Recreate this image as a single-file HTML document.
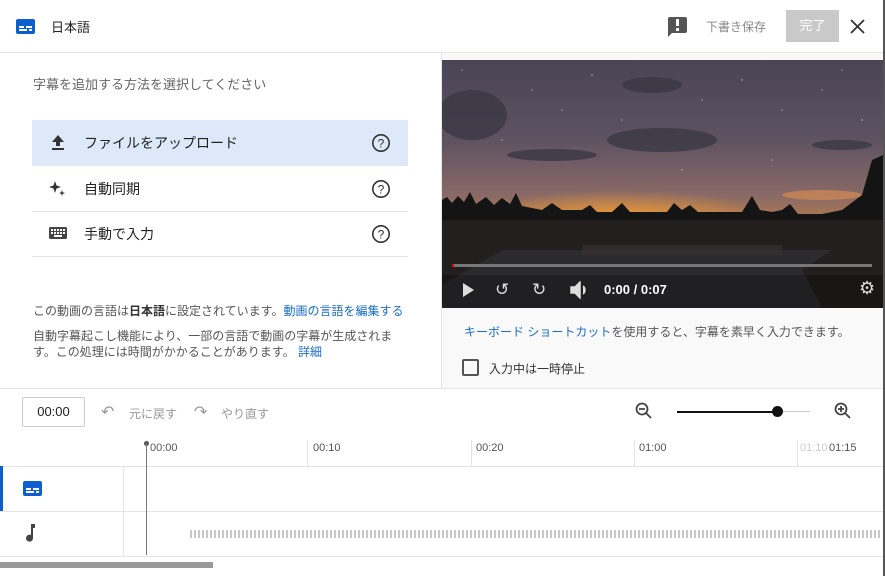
<!DOCTYPE html>
<html><head><meta charset="utf-8"><style>
*{box-sizing:border-box;margin:0;padding:0}
body{width:885px;height:576px;overflow:hidden;background:#fff;font-family:"Liberation Sans","Noto Sans CJK JP",sans-serif;color:#333;position:relative}
.a{position:absolute}
.t{font-size:12px;color:#555}
.blue{color:#1a6cc9}
</style></head><body>
<!-- header -->
<div class="a" style="left:16px;top:19px;width:19px;height:15px;background:#0d5fd0;border-radius:2px"></div>
<div class="a" style="left:19px;top:26px;width:5px;height:2px;background:#fff"></div>
<div class="a" style="left:26px;top:26px;width:6px;height:2px;background:#fff"></div>
<div class="a" style="left:19px;top:29px;width:8px;height:2px;background:#fff"></div>
<div class="a" style="left:29px;top:29px;width:3px;height:2px;background:#fff"></div>
<div class="a" style="left:51px;top:17px;font-size:13px;color:#222">日本語</div>
<div class="a" style="left:668px;top:17px;width:19px;height:16px;background:#555;border-radius:2px"></div>
<div class="a" style="left:668px;top:32px;width:0;height:0;border-top:5px solid #555;border-right:5px solid transparent"></div>
<div class="a" style="left:676px;top:19px;width:3px;height:7px;background:#fff"></div>
<div class="a" style="left:676px;top:28px;width:3px;height:3px;background:#fff"></div>
<div class="a" style="left:706px;top:18px;font-size:12px;color:#888">下書き保存</div>
<div class="a" style="left:786px;top:10px;width:53px;height:32px;background:#c9c9c9;color:#fff;font-size:13px;text-align:center;line-height:32px">完了</div>
<svg class="a" style="left:850px;top:19px" width="15" height="15"><path d="M1 1l13 13M14 1L1 14" stroke="#333" stroke-width="1.8"/></svg>
<div class="a" style="left:0;top:52px;width:885px;height:1px;background:#e4e4e4"></div>
<!-- left panel -->
<div class="a t" style="left:33px;top:74px;font-size:13px;color:#666">字幕を追加する方法を選択してください</div>
<div class="a" style="left:32px;top:120px;width:376px;height:45px;background:#dde9f8"></div>
<div class="a" style="left:32px;top:211px;width:376px;height:1px;background:#e4e4e4"></div>
<div class="a" style="left:32px;top:256px;width:376px;height:1px;background:#e4e4e4"></div>
<div class="a" style="left:32px;top:165px;width:376px;height:1px;background:#e8e8e8"></div>
<svg class="a" style="left:49px;top:133px" width="18" height="18" viewBox="0 0 18 18"><path d="M9 2L3 9h4v4h4V9h4z M3 15h12v2H3z" fill="#333"/></svg>
<div class="a" style="left:84px;top:133px;font-size:14px;color:#222">ファイルをアップロード</div>
<svg class="a" style="left:48px;top:179px" width="20" height="20" viewBox="0 0 20 20"><path d="M7 2l1.5 4.5L13 8l-4.5 1.5L7 14l-1.5-4.5L1 8l4.5-1.5z M14 11l.8 2.2 2.2.8-2.2.8L14 17l-.8-2.2-2.2-.8 2.2-.8z" fill="#333"/></svg>
<div class="a" style="left:84px;top:179px;font-size:14px;color:#222">自動同期</div>
<svg class="a" style="left:48px;top:225px" width="20" height="16" viewBox="0 0 20 16"><rect x="1" y="2" width="18" height="12" rx="1.5" fill="#444"/><g fill="#fff"><rect x="3" y="4" width="2" height="2"/><rect x="6" y="4" width="2" height="2"/><rect x="9" y="4" width="2" height="2"/><rect x="12" y="4" width="2" height="2"/><rect x="15" y="4" width="2" height="2"/><rect x="3" y="7" width="2" height="2"/><rect x="6" y="7" width="2" height="2"/><rect x="9" y="7" width="2" height="2"/><rect x="12" y="7" width="2" height="2"/><rect x="15" y="7" width="2" height="2"/><rect x="6" y="10" width="8" height="2"/></g></svg>
<div class="a" style="left:84px;top:224px;font-size:14px;color:#222">手動で入力</div>
<svg class="a" style="left:371px;top:133px" width="20" height="20" viewBox="0 0 20 20"><circle cx="10" cy="10" r="8.2" fill="none" stroke="#333" stroke-width="1.6"/><text x="10" y="14.5" font-size="12" text-anchor="middle" fill="#333" font-family="Liberation Sans">?</text></svg>
<svg class="a" style="left:371px;top:179px" width="20" height="20" viewBox="0 0 20 20"><circle cx="10" cy="10" r="8.2" fill="none" stroke="#333" stroke-width="1.6"/><text x="10" y="14.5" font-size="12" text-anchor="middle" fill="#333" font-family="Liberation Sans">?</text></svg>
<svg class="a" style="left:371px;top:224px" width="20" height="20" viewBox="0 0 20 20"><circle cx="10" cy="10" r="8.2" fill="none" stroke="#333" stroke-width="1.6"/><text x="10" y="14.5" font-size="12" text-anchor="middle" fill="#333" font-family="Liberation Sans">?</text></svg>
<div class="a t" style="left:33px;top:302px">この動画の言語は<b style="color:#333">日本語</b>に設定されています。<span class="blue">動画の言語を編集する</span></div>
<div class="a t" style="left:33px;top:328px;width:380px;line-height:16px">自動字幕起こし機能により、一部の言語で動画の字幕が生成されます。この処理には時間がかかることがあります。 <span class="blue">詳細</span></div>
<!-- right panel -->
<div class="a" style="left:441px;top:53px;width:442px;height:335px;background:#f9f9f9;border-left:1px solid #e4e4e4"></div>
<svg class="a" style="left:442px;top:60px" width="441" height="248" viewBox="0 0 441 248">
<defs>
<linearGradient id="sky" x1="0" y1="0" x2="0" y2="1"><stop offset="0" stop-color="#4a4454"/><stop offset=".5" stop-color="#5e5262"/><stop offset=".85" stop-color="#8a6a66"/><stop offset="1" stop-color="#b07850"/></linearGradient>
<radialGradient id="glow" cx=".45" cy="1" r=".6"><stop offset="0" stop-color="#ffd040"/><stop offset=".3" stop-color="#e89838" stop-opacity=".8"/><stop offset="1" stop-color="#e89838" stop-opacity="0"/></radialGradient>
</defs>
<rect width="441" height="160" fill="url(#sky)"/>
<rect x="60" y="110" width="260" height="50" fill="url(#glow)"/>
<ellipse cx="380" cy="135" rx="40" ry="5" fill="#e09050" opacity=".6"/>
<g fill="#3a3844" opacity=".8"><ellipse cx="220" cy="80" rx="55" ry="12"/><ellipse cx="110" cy="95" rx="45" ry="6"/><ellipse cx="30" cy="55" rx="35" ry="25"/><ellipse cx="210" cy="25" rx="30" ry="8"/><ellipse cx="400" cy="85" rx="30" ry="5"/></g>
<g fill="#fff" opacity=".7"><circle cx="20" cy="10" r=".6"/><circle cx="90" cy="30" r=".6"/><circle cx="150" cy="15" r=".7"/><circle cx="260" cy="40" r=".6"/><circle cx="300" cy="20" r=".7"/><circle cx="340" cy="50" r=".6"/><circle cx="380" cy="30" r=".6"/><circle cx="420" cy="60" r=".7"/><circle cx="180" cy="60" r=".6"/><circle cx="60" cy="80" r=".6"/><circle cx="330" cy="100" r=".6"/><circle cx="240" cy="110" r=".6"/><circle cx="120" cy="50" r=".6"/><circle cx="400" cy="10" r=".6"/></g>
<rect y="158" width="441" height="90" fill="#221f1e"/>
<path d="M0 160 L0 140 L5 137 L10 143 L16 136 L22 142 L28 132 L34 144 L44 137 L52 145 L60 138 L68 144 L74 133 L80 146 L90 148 L100 150 L110 143 L120 150 L140 150 L148 145 L155 152 L170 152 L180 143 L188 152 L225 152 L232 143 L240 150 L248 145 L256 152 L300 152 L310 136 L318 150 L330 152 L340 150 L348 144 L356 154 L380 154 L400 150 L420 135 L430 100 L441 95 L441 160 Z" fill="#151414"/>
<path d="M60 190 L390 190 L360 210 L380 248 L0 248 L0 225 Z" fill="#2b2a2c"/>
<rect x="140" y="185" width="200" height="10" fill="#3a3234" opacity=".6"/>
<rect y="215" width="441" height="33" fill="#000" opacity=".25"/>
</svg>
<div class="a" style="left:452px;top:264px;width:420px;height:3px;background:#777"></div>
<div class="a" style="left:452px;top:264px;width:2px;height:3px;background:#e00"></div>
<svg class="a" style="left:462px;top:282px" width="14" height="16"><path d="M1 1l11 7-11 7z" fill="#ddd"/></svg>
<div class="a" style="left:495px;top:280px;font-size:17px;color:#ddd">↺</div>
<div class="a" style="left:532px;top:280px;font-size:17px;color:#ddd">↻</div>
<svg class="a" style="left:570px;top:281px" width="20" height="18"><path d="M1 6h4l5-5v16l-5-5H1z M13 5a5 5 0 0 1 0 8" fill="#ddd" stroke="#ddd" stroke-width="1.5"/></svg>
<div class="a" style="left:604px;top:282px;font-size:13px;color:#fff;font-weight:bold">0:00 / 0:07</div>
<div class="a" style="left:859px;top:278px;font-size:18px;color:#ddd;font-family:'DejaVu Sans',sans-serif">⚙</div>
<div class="a t" style="left:464px;top:323px"><span class="blue">キーボード ショートカット</span>を使用すると、字幕を素早く入力できます。</div>
<div class="a" style="left:462px;top:359px;width:17px;height:17px;border:2px solid #555;border-radius:2px"></div>
<div class="a t" style="left:489px;top:360px;color:#333">入力中は一時停止</div>
<div class="a" style="left:0;top:388px;width:885px;height:1px;background:#e4e4e4"></div>
<!-- toolbar -->
<div class="a" style="left:22px;top:397px;width:63px;height:30px;border:1px solid #ccc;border-radius:2px;font-size:13px;text-align:center;line-height:28px;color:#222">00:00</div>
<div class="a" style="left:101px;top:402px;font-size:16px;color:#999">↶</div>
<div class="a" style="left:129px;top:405px;font-size:12px;color:#999">元に戻す</div>
<div class="a" style="left:194px;top:402px;font-size:16px;color:#999">↷</div>
<div class="a" style="left:221px;top:405px;font-size:12px;color:#999">やり直す</div>
<svg class="a" style="left:635px;top:402px" width="18" height="18"><circle cx="7" cy="7" r="5.5" fill="none" stroke="#444" stroke-width="1.8"/><path d="M4 7h6M11 11l5 5" stroke="#444" stroke-width="1.8"/></svg>
<div class="a" style="left:677px;top:411px;width:100px;height:2px;background:#111"></div>
<div class="a" style="left:777px;top:411px;width:33px;height:1px;background:#ccc"></div>
<div class="a" style="left:772px;top:406px;width:11px;height:11px;border-radius:50%;background:#111"></div>
<svg class="a" style="left:834px;top:402px" width="18" height="18"><circle cx="7" cy="7" r="5.5" fill="none" stroke="#444" stroke-width="1.8"/><path d="M4 7h6M7 4v6M11 11l5 5" stroke="#444" stroke-width="1.8"/></svg>
<!-- timeline -->
<div class="a" style="left:0;top:466px;width:885px;height:1px;background:#e4e4e4"></div>
<div class="a" style="left:0;top:511px;width:885px;height:1px;background:#e4e4e4"></div>
<div class="a" style="left:0;top:556px;width:885px;height:1px;background:#e4e4e4"></div>
<div class="a" style="left:123px;top:466px;width:1px;height:90px;background:#e4e4e4"></div>
<div class="a" style="left:0;top:466px;width:3px;height:45px;background:#0d5fd0"></div>
<div class="a" style="left:307px;top:440px;width:1px;height:26px;background:#e4e4e4"></div>
<div class="a" style="left:471px;top:440px;width:1px;height:26px;background:#e4e4e4"></div>
<div class="a" style="left:634px;top:440px;width:1px;height:26px;background:#e4e4e4"></div>
<div class="a" style="left:797px;top:440px;width:1px;height:26px;background:#e4e4e4"></div>
<div class="a" style="left:150px;top:442px;font-size:11px;color:#555">00:00</div>
<div class="a" style="left:313px;top:442px;font-size:11px;color:#555">00:10</div>
<div class="a" style="left:476px;top:442px;font-size:11px;color:#555">00:20</div>
<div class="a" style="left:639px;top:442px;font-size:11px;color:#555">01:00</div>
<div class="a" style="left:800px;top:442px;font-size:11px;color:#ccc">01:10</div>
<div class="a" style="left:829px;top:442px;font-size:11px;color:#555">01:15</div>
<div class="a" style="left:144px;top:441px;width:5px;height:5px;border-radius:50%;background:#555"></div>
<div class="a" style="left:146px;top:443px;width:1px;height:112px;background:#777"></div>
<div class="a" style="left:23px;top:481px;width:19px;height:15px;background:#0d5fd0;border-radius:2px"></div>
<div class="a" style="left:26px;top:488px;width:5px;height:2px;background:#fff"></div>
<div class="a" style="left:33px;top:488px;width:6px;height:2px;background:#fff"></div>
<div class="a" style="left:26px;top:491px;width:8px;height:2px;background:#fff"></div>
<div class="a" style="left:36px;top:491px;width:3px;height:2px;background:#fff"></div>
<svg class="a" style="left:24px;top:523px" width="14" height="20"><path d="M7 1h4v4H9v10a3.5 3.5 0 1 1-2-3z" fill="#444"/></svg>
<div class="a" style="left:190px;top:530px;width:690px;height:8px;background:repeating-linear-gradient(90deg,#c8c8c8 0 2px,transparent 2px 4px)"></div>
<div class="a" style="left:0;top:562px;width:213px;height:6px;background:#999"></div>
<div class="a" style="left:883px;top:0;width:2px;height:576px;background:#555"></div>
</body></html>
